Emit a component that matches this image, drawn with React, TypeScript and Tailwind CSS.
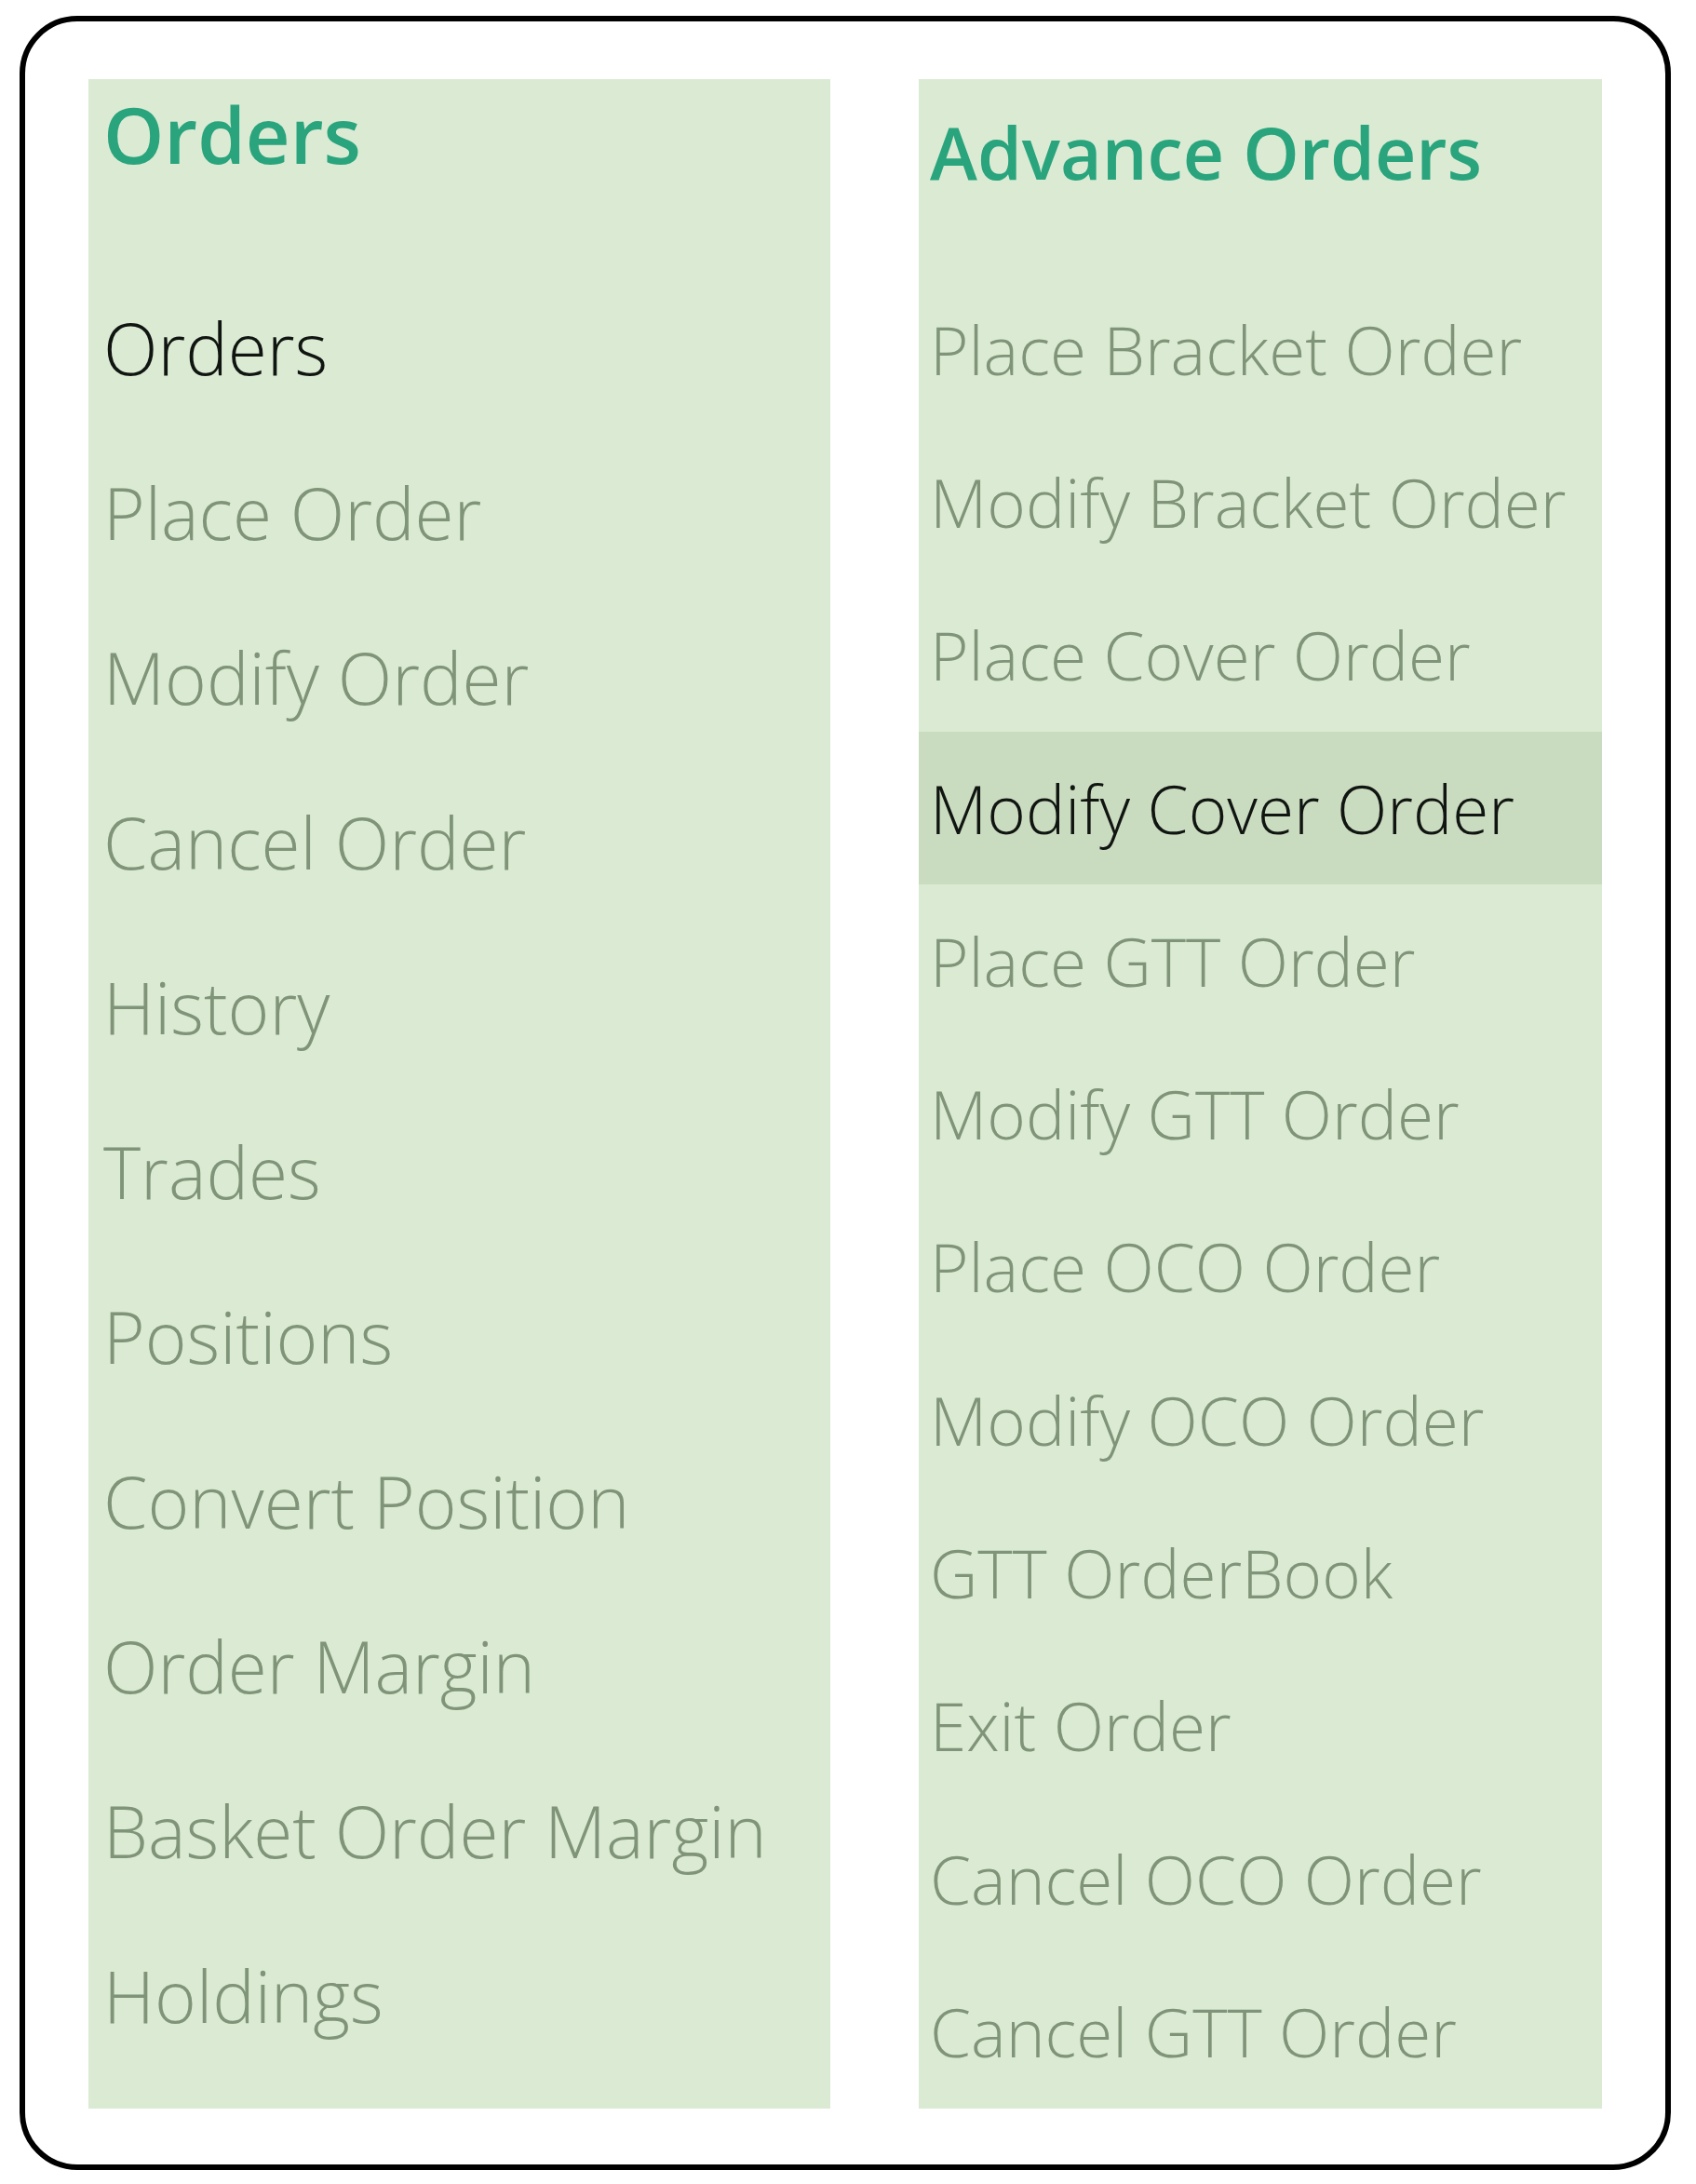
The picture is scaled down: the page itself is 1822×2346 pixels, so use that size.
const orders = [
  'Orders',
  'Place Order',
  'Modify Order',
  'Cancel Order',
  'History',
  'Trades',
  'Positions',
  'Convert Position',
  'Order Margin',
  'Basket Order Margin',
  'Holdings',
]

const advanceOrders = [
  'Place Bracket Order',
  'Modify Bracket Order',
  'Place Cover Order',
  'Modify Cover Order',
  'Place GTT Order',
  'Modify GTT Order',
  'Place OCO Order',
  'Modify OCO Order',
  'GTT OrderBook',
  'Exit Order',
  'Cancel OCO Order',
  'Cancel GTT Order',
]

export default function App() {
  return (
    <div className="w-[1822px] h-[2346px] bg-white pl-[21px] pt-[17px] font-['Open_Sans',sans-serif]">
      <div className="w-[1774px] h-[2314px] rounded-[62px] border-[6px] border-black bg-white flex gap-[95px] pl-[68px] pt-[62px]">
        {/* left column */}
        <div className="w-[797px] h-[2180px] bg-[#dbebd3] flex flex-col overflow-hidden">
          <div className="h-[200px] shrink-0 pl-[16px] pt-[17px]">
            <h2 className="text-[83px] leading-none font-semibold text-[#2aa47d]">Orders</h2>
          </div>
          {orders.map((item, i) => (
            <div
              key={item}
              className="h-[177px] shrink-0 flex items-center pl-[16px]"
            >
              <span
                className={
                  i === 0
                    ? 'text-[76.5px] leading-none font-light text-[#111511]'
                    : 'text-[76.5px] leading-none font-light text-[#7f9478]'
                }
              >
                {item}
              </span>
            </div>
          ))}
        </div>

        {/* right column */}
        <div className="w-[734px] h-[2180px] bg-[#dbebd3] flex flex-col overflow-hidden">
          <div className="h-[208px] shrink-0 pl-[12px] pt-[40px]">
            <h2 className="text-[77px] leading-none font-semibold text-[#2aa47d]">Advance Orders</h2>
          </div>
          {advanceOrders.map((item) => {
            const active = item === 'Modify Cover Order'
            return (
              <div
                key={item}
                className={
                  active
                    ? 'h-[164.3px] shrink-0 flex items-center pl-[12px] bg-[#cadcc0]'
                    : 'h-[164.3px] shrink-0 flex items-center pl-[12px]'
                }
              >
                <span
                  className={
                    active
                      ? 'text-[71px] leading-none font-light text-[#111511]'
                      : 'text-[71px] leading-none font-light text-[#7f9478]'
                  }
                >
                  {item}
                </span>
              </div>
            )
          })}
        </div>
      </div>
    </div>
  )
}
